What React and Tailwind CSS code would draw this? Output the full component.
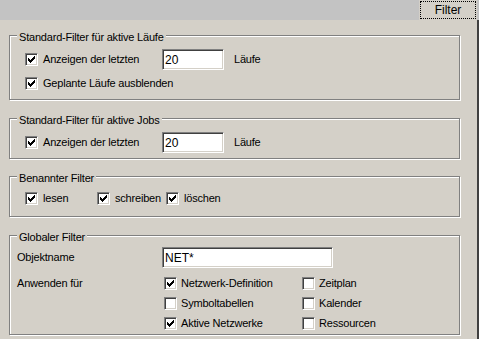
import React from 'react'

const font = { fontFamily: '"Liberation Sans", Arial, sans-serif' }

function Check({ checked }) {
  return (
    <span className="inline-block w-[13px] h-[13px] shrink-0 border border-t-[#808080] border-l-[#808080] border-b-white border-r-white">
      <span className="block w-[11px] h-[11px] bg-white shadow-[inset_1px_1px_0_#404040,inset_-1px_-1px_0_#d4d0c8] relative">
        {checked && (
          <svg width="7" height="7" viewBox="0 0 7 7" shapeRendering="crispEdges" className="absolute left-[2px] top-[2px]">
            {[2, 3, 4, 3, 2, 1, 0].map((y, x) => (
              <rect key={x} x={x} y={y} width="1" height="3" fill="#000" />
            ))}
          </svg>
        )}
      </span>
    </span>
  )
}

function Box({ label, checked, gap = 'ml-[5px]' }) {
  return (
    <span className="flex items-center">
      <Check checked={checked} />
      <span className={`${gap} whitespace-nowrap`}>{label}</span>
    </span>
  )
}

function Field({ value, w }) {
  return (
    <span className={`${w} h-[21px] shrink-0 border border-t-[#808080] border-l-[#808080] border-b-white border-r-white`}>
      <span className="flex items-center h-full bg-white pl-[2px] text-[12px] tracking-normal shadow-[inset_1px_1px_0_#404040,inset_-1px_-1px_0_#d4d0c8]">
        {value}
      </span>
    </span>
  )
}

function Group({ title, className, children }) {
  return (
    <div className={`relative w-[451px] border border-[#808080] shadow-[inset_1px_1px_0_#fff,1px_1px_0_#fff] ${className}`}>
      <span className="absolute left-[7px] top-[-5px] px-[2px] bg-[#d4d0c8] leading-[13px] whitespace-nowrap">{title}</span>
      {children}
    </div>
  )
}

export default function App() {
  return (
    <div style={font} className="w-[479px] h-[339px] bg-[#d4d0c8] text-[11px] tracking-[-0.2px] text-black overflow-hidden">
      {/* tab strip */}
      <div className="h-[20px] bg-[#c3c3c3] flex justify-end pr-[2px]">
        <div className="w-[58px] h-[20px] bg-[#d4d0c8] pt-[1px] px-[1px]">
          <div className="h-[18px] border border-dotted border-black flex items-center justify-center text-[12px] tracking-normal">
            Filter
          </div>
        </div>
      </div>

      <div className="flex h-[319px]">
        <div className="flex-1 pl-[9px] pt-[15px]">
          <Group title="Standard-Filter für aktive Läufe" className="h-[65px] pt-[13px]">
            <div className="h-[21px] flex items-center pl-[15px]">
              <span className="w-[137px]"><Box label="Anzeigen der letzten" checked /></span>
              <Field value="20" w="w-[62px]" />
              <span className="ml-[10px]">Läufe</span>
            </div>
            <div className="mt-[3px] h-[21px] flex items-center pl-[15px]">
              <Box label="Geplante Läufe ausblenden" checked />
            </div>
          </Group>

          <Group title="Standard-Filter für aktive Jobs" className="mt-[18px] h-[41px] pt-[13px]">
            <div className="h-[21px] flex items-center pl-[15px]">
              <span className="w-[137px]"><Box label="Anzeigen der letzten" checked /></span>
              <Field value="20" w="w-[62px]" />
              <span className="ml-[10px]">Läufe</span>
            </div>
          </Group>

          <Group title="Benannter Filter" className="mt-[17px] h-[41px] pt-[11px]">
            <div className="h-[21px] flex items-center pl-[15px]">
              <span className="w-[72px]"><Box label="lesen" checked /></span>
              <span className="w-[69px]"><Box label="schreiben" checked /></span>
              <Box label="löschen" checked />
            </div>
          </Group>

          <Group title="Globaler Filter" className="mt-[18px] h-[100px] pt-[11px]">
            <div className="h-[21px] flex items-center pl-[7px]">
              <span className="w-[145px]">Objektname</span>
              <Field value="NET*" w="w-[171px]" />
            </div>
            <div className="mt-[5px] flex pl-[7px]">
              <div className="w-[147px] h-[20px] flex items-center">Anwenden für</div>
              <div className="w-[138px]">
                <div className="h-[20px] flex items-center"><Box label="Netzwerk-Definition" checked gap="ml-[4px]" /></div>
                <div className="h-[20px] flex items-center"><Box label="Symboltabellen" gap="ml-[4px]" /></div>
                <div className="h-[20px] flex items-center"><Box label="Aktive Netzwerke" checked gap="ml-[4px]" /></div>
              </div>
              <div>
                <div className="h-[20px] flex items-center"><Box label="Zeitplan" gap="ml-[4px]" /></div>
                <div className="h-[20px] flex items-center"><Box label="Kalender" gap="ml-[4px]" /></div>
                <div className="h-[20px] flex items-center"><Box label="Ressourcen" gap="ml-[4px]" /></div>
              </div>
            </div>
          </Group>
        </div>
        <div className="w-[2px] bg-[#404040]" />
      </div>
    </div>
  )
}
